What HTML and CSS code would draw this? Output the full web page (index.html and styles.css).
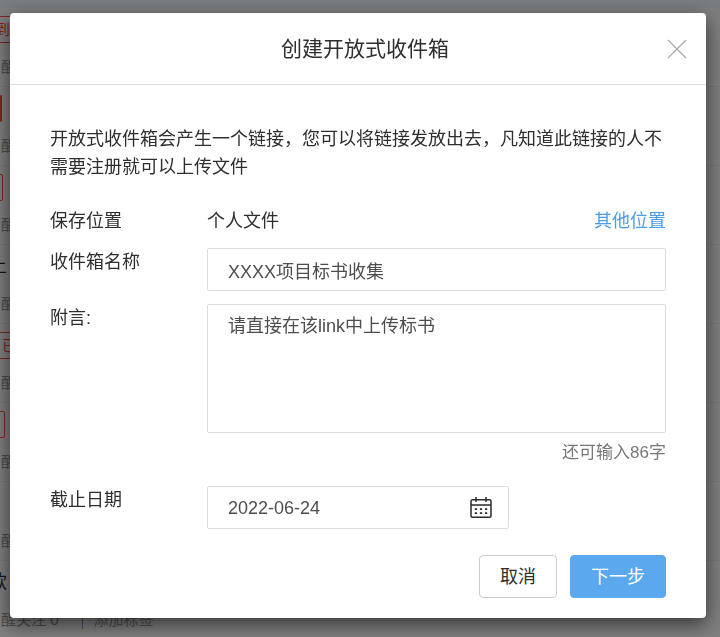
FILE: index.html
```html
<!DOCTYPE html>
<html lang="zh-CN">
<head>
<meta charset="utf-8">
<meta name="viewport" content="width=device-width, initial-scale=1">
<title>创建开放式收件箱</title>
<link rel="stylesheet" href="styles.css">
</head>
<body>
<main class="page">
  <div class="topbar"></div>
  <ul class="files">
    <li class="file"><div class="title"><span class="tag tag-text">到</span></div><div class="meta">醒</div></li>
    <li class="file"><div class="title"><span class="tag tag-solid"></span></div><div class="meta">醒</div></li>
    <li class="file"><div class="title"><span class="tag tag-short"></span></div><div class="meta">醒</div></li>
    <li class="file"><div class="title"><span class="name">上</span></div><div class="meta">醒</div></li>
    <li class="file"><div class="title"><span class="tag tag-open">已</span></div><div class="meta">醒</div></li>
    <li class="file"><div class="title"><span class="tag tag-edge"></span></div><div class="meta">醒</div></li>
    <li class="file"><div class="title"></div><div class="meta">醒</div></li>
    <li class="file"><div class="title"><span class="name">款</span></div><div class="meta"><span>醒关注 0</span><span class="add">添加标签</span></div></li>
  </ul>
</main>

<div class="overlay">
  <form class="dialog" role="dialog" aria-modal="true" aria-labelledby="dialog-title">
    <header class="dialog-header">
      <h1 id="dialog-title">创建开放式收件箱</h1>
      <button class="close" type="button" aria-label="关闭">
        <svg width="20" height="20" viewBox="0 0 20 20" fill="none" stroke="#a9a9a9" stroke-width="1.2"><path d="M1 1L19 19M19 1L1 19"/></svg>
      </button>
    </header>
    <div class="dialog-body">
      <p class="intro">开放式收件箱会产生一个链接，您可以将链接发放出去，凡知道此链接的人不需要注册就可以上传文件</p>
      <div class="fields">
        <span class="label">保存位置</span>
        <div class="location"><span>个人文件</span><a href="#">其他位置</a></div>

        <label for="box-name">收件箱名称</label>
        <input id="box-name" class="control" type="text" value="XXXX项目标书收集">

        <label for="note">附言:</label>
        <div class="note">
          <textarea id="note" class="control">请直接在该link中上传标书</textarea>
          <div class="counter">还可输入86字</div>
        </div>

        <label for="deadline">截止日期</label>
        <div class="control date">
          <input id="deadline" type="text" value="2022-06-24">
          <button type="button" aria-label="选择日期">
            <svg width="22" height="22" viewBox="0 0 22 22" fill="none" stroke="#2b2b2b" stroke-width="1.5"><rect x="1" y="2.8" width="20" height="17.4" rx="1.5"/><path d="M1 8H21M6 0V5M16 0V5"/><path d="M4.8 12.2H7M9.9 12.2H12.1M15 12.2H17.2M4.8 16.2H7M9.9 16.2H12.1M15 16.2H17.2" stroke-width="1.8"/></svg>
          </button>
        </div>
      </div>
      <footer class="actions">
        <button class="btn" type="button">取消</button>
        <button class="btn primary" type="submit">下一步</button>
      </footer>
    </div>
  </form>
</div>
</body>
</html>
```

FILE: styles.css
```css
* {
  box-sizing: border-box;
}

body,
button,
input,
textarea {
  font-family: "Liberation Sans", "Noto Sans CJK SC", sans-serif;
  font-size: 18px;
  line-height: 28px;
  color: #2e2e2e;
}

body {
  margin: 0;
  background: #fff;
  overflow: hidden;
}

.page {
  height: 100vh;
  overflow: hidden;
}

.topbar {
  height: 8px;
  background: #f1fafe;
}

.files {
  list-style: none;
  margin: 0;
  padding: 0;
}

.file {
  height: 79px;
  padding-top: 7px;
  border-bottom: 1px solid #f0f0f0;
}

.title {
  display: flex;
  align-items: center;
  height: 28px;
}

.name {
  margin-left: -11px;
}

.tag {
  height: 27px;
  border: 1px solid #ff4a40;
  border-radius: 2px;
  color: #ff4a40;
  font-size: 15px;
  line-height: 25px;
}

.tag-text {
  width: 40px;
  margin-left: -6px;
}

.tag-open {
  width: 40px;
  padding-left: 7px;
  margin-left: -6px;
}

.tag-solid {
  width: 2px;
  background: #ff4a40;
}

.tag-short {
  width: 10px;
  margin-left: -7px;
}

.tag-edge {
  width: 10px;
  margin-left: -5px;
}

.meta {
  display: flex;
  gap: 23px;
  padding: 10px 0 0 1px;
  font-size: 15px;
  color: #999;
}

.add {
  padding-left: 12px;
  background: linear-gradient(#5aa7ee, #5aa7ee) 0 center / 1px 18px no-repeat;
}

.overlay {
  position: fixed;
  inset: 0;
  padding: 13px 14px 19px 10px;
  background: rgba(0, 0, 0, 0.5);
  overflow: hidden;
}

.dialog {
  background: #fff;
  border-radius: 4px;
  box-shadow: 0 6px 20px rgba(0, 0, 0, 0.6);
}

.dialog-header {
  display: grid;
  grid-template-columns: 1fr auto 1fr;
  align-items: center;
  height: 72px;
  padding: 1px 19px 0 33px;
  border-bottom: 1px solid #dcdee6;
}

.dialog-header h1 {
  grid-column: 2;
  margin: 0;
  font-size: 21px;
  font-weight: 400;
  line-height: 28px;
}

.close {
  justify-self: end;
  display: flex;
  padding: 0;
  border: 0;
  background: none;
}

.dialog-body {
  padding: 40px 40px 20px;
}

.intro {
  margin: 0 0 26px;
}

.fields {
  display: grid;
  grid-template-columns: 157px 1fr;
  row-gap: 13px;
}

.location {
  display: flex;
  justify-content: space-between;
}

.location a {
  color: #4a9de8;
  text-decoration: none;
}

.control {
  width: 100%;
  height: 43px;
  padding: 0 20px;
  border: 1px solid #dcdde2;
  border-radius: 2px;
  background: #fff;
  color: #4d4d4d;
}

textarea.control {
  display: block;
  height: 129px;
  padding: 7px 20px;
  resize: none;
}

.counter {
  padding: 6px 0;
  text-align: right;
  font-size: 17px;
  color: #777;
}

.date {
  display: flex;
  align-items: center;
  width: 302px;
  padding: 0 16px 0 20px;
}

.date input {
  flex: 1;
  min-width: 0;
  padding: 0;
  border: 0;
  color: inherit;
}

.date button {
  display: flex;
  padding: 0;
  border: 0;
  background: none;
}

.actions {
  display: flex;
  justify-content: flex-end;
  gap: 13px;
  margin-top: 26px;
}

.btn {
  height: 43px;
  padding: 0 20px;
  border: 1px solid #ccc;
  border-radius: 4px;
  background: #fff;
}

.btn.primary {
  border-color: #5ca8ef;
  background: #5ca8ef;
  color: #fff;
}
```
